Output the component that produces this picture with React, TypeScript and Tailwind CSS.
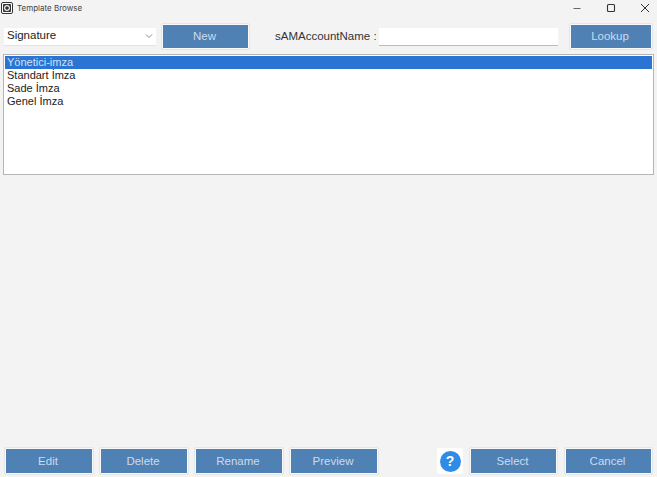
const font = "font-['Liberation_Sans',Arial,sans-serif]";

function Btn({ label, className = "w-[88px] h-[26px]" }: { label: string; className?: string }) {
  return (
    <button
      type="button"
      className={`shrink-0 rounded-[1px] border border-[#fafafa] bg-[#4f81b5] pt-[1px] pr-[2px] text-[11.5px] text-[#cddbea] outline outline-1 outline-[#e6e6e6] ${className}`}
    >
      {label}
    </button>
  );
}

function AppIcon() {
  return (
    <svg width="12" height="12" viewBox="0 0 12 12" className="shrink-0">
      <rect x="0.5" y="0.5" width="11" height="11" rx="1.5" fill="#fff" stroke="#333" />
      <rect x="2" y="2" width="8" height="8" rx="1" fill="#333" />
      <circle cx="6" cy="6" r="2.4" fill="none" stroke="#eee" strokeWidth="1.2" />
    </svg>
  );
}

const items = ["Yönetici-imza", "Standart İmza", "Sade İmza", "Genel İmza"];

export default function App() {
  return (
    <div className={`flex h-[477px] w-[657px] flex-col overflow-hidden bg-[#f3f3f3] text-[#222] ${font}`}>
      {/* title bar */}
      <div className="flex h-[15px] shrink-0 items-center pl-[1px]">
        <AppIcon />
        <span className="ml-[4px] font-['Inter',sans-serif] text-[8px] text-[#444]">Template Browse</span>
        <div className="ml-auto flex items-center">
          <svg width="10" height="10" viewBox="0 0 10 10" className="mr-[24px]">
            <path d="M1.5 5.5h7" stroke="#666" strokeWidth="1" />
          </svg>
          <svg width="10" height="10" viewBox="0 0 10 10" className="mr-[24px]">
            <rect x="1.5" y="1.5" width="7" height="7" rx="1" fill="none" stroke="#333" strokeWidth="1.1" />
          </svg>
          <svg width="10" height="10" viewBox="0 0 10 10" className="mr-[7px]">
            <path d="M1 1l8 8M9 1l-8 8" stroke="#333" strokeWidth="1" />
          </svg>
        </div>
      </div>

      {/* top row */}
      <div className="mt-[9px] flex h-[25px] shrink-0 items-center pl-[4px]">
        <div className="flex h-[18px] w-[152px] items-center justify-between border-b border-[#e2e2e2] bg-white pl-[3px] pr-[3px] text-[11.5px]">
          <span>Signature</span>
          <svg width="8" height="6" viewBox="0 0 8 6">
            <path d="M1 1.5l3 3 3-3" fill="none" stroke="#888" strokeWidth="1" />
          </svg>
        </div>
        <Btn label="New" className="ml-[6px] h-[25px] w-[87px]" />
        <span className="ml-[26px] w-[104px] whitespace-nowrap text-[11.5px] text-[#333]">sAMAccountName :</span>
        <div className="h-[18px] w-[179px] border-b border-[#bbb] bg-white" />
        <Btn label="Lookup" className="ml-[12px] h-[25px] w-[82px]" />
      </div>

      {/* list */}
      <div className="ml-[3px] mt-[5px] h-[121px] w-[651px] shrink-0 border border-[#b5b5b5] bg-white p-[1px] text-[11px] leading-[13px]">
        {items.map((item, i) => (
          <div
            key={item}
            className={i === 0 ? "bg-[#2a74d3] pl-[2px] text-[#cfe0f5]" : "pl-[2px] text-[#222]"}
          >
            {item}
          </div>
        ))}
      </div>

      {/* bottom row */}
      <div className="mt-auto mb-[3px] flex h-[26px] shrink-0 items-center pl-[5px]">
        <Btn label="Edit" />
        <Btn label="Delete" className="ml-[7px] h-[26px] w-[88px]" />
        <Btn label="Rename" className="ml-[7px] h-[26px] w-[88px]" />
        <Btn label="Preview" className="ml-[7px] h-[26px] w-[88px]" />
        <div className="ml-[59px] flex h-[26px] w-[26px] shrink-0 items-center justify-center rounded-[2px] bg-white">
          <div className="flex h-[21px] w-[21px] items-center justify-center rounded-full bg-[#2f8ce6] text-[14px] font-bold text-white">
            ?
          </div>
        </div>
        <Btn label="Select" className="ml-[7px] h-[26px] w-[87px]" />
        <Btn label="Cancel" className="ml-[8px] h-[26px] w-[87px]" />
      </div>
    </div>
  );
}
